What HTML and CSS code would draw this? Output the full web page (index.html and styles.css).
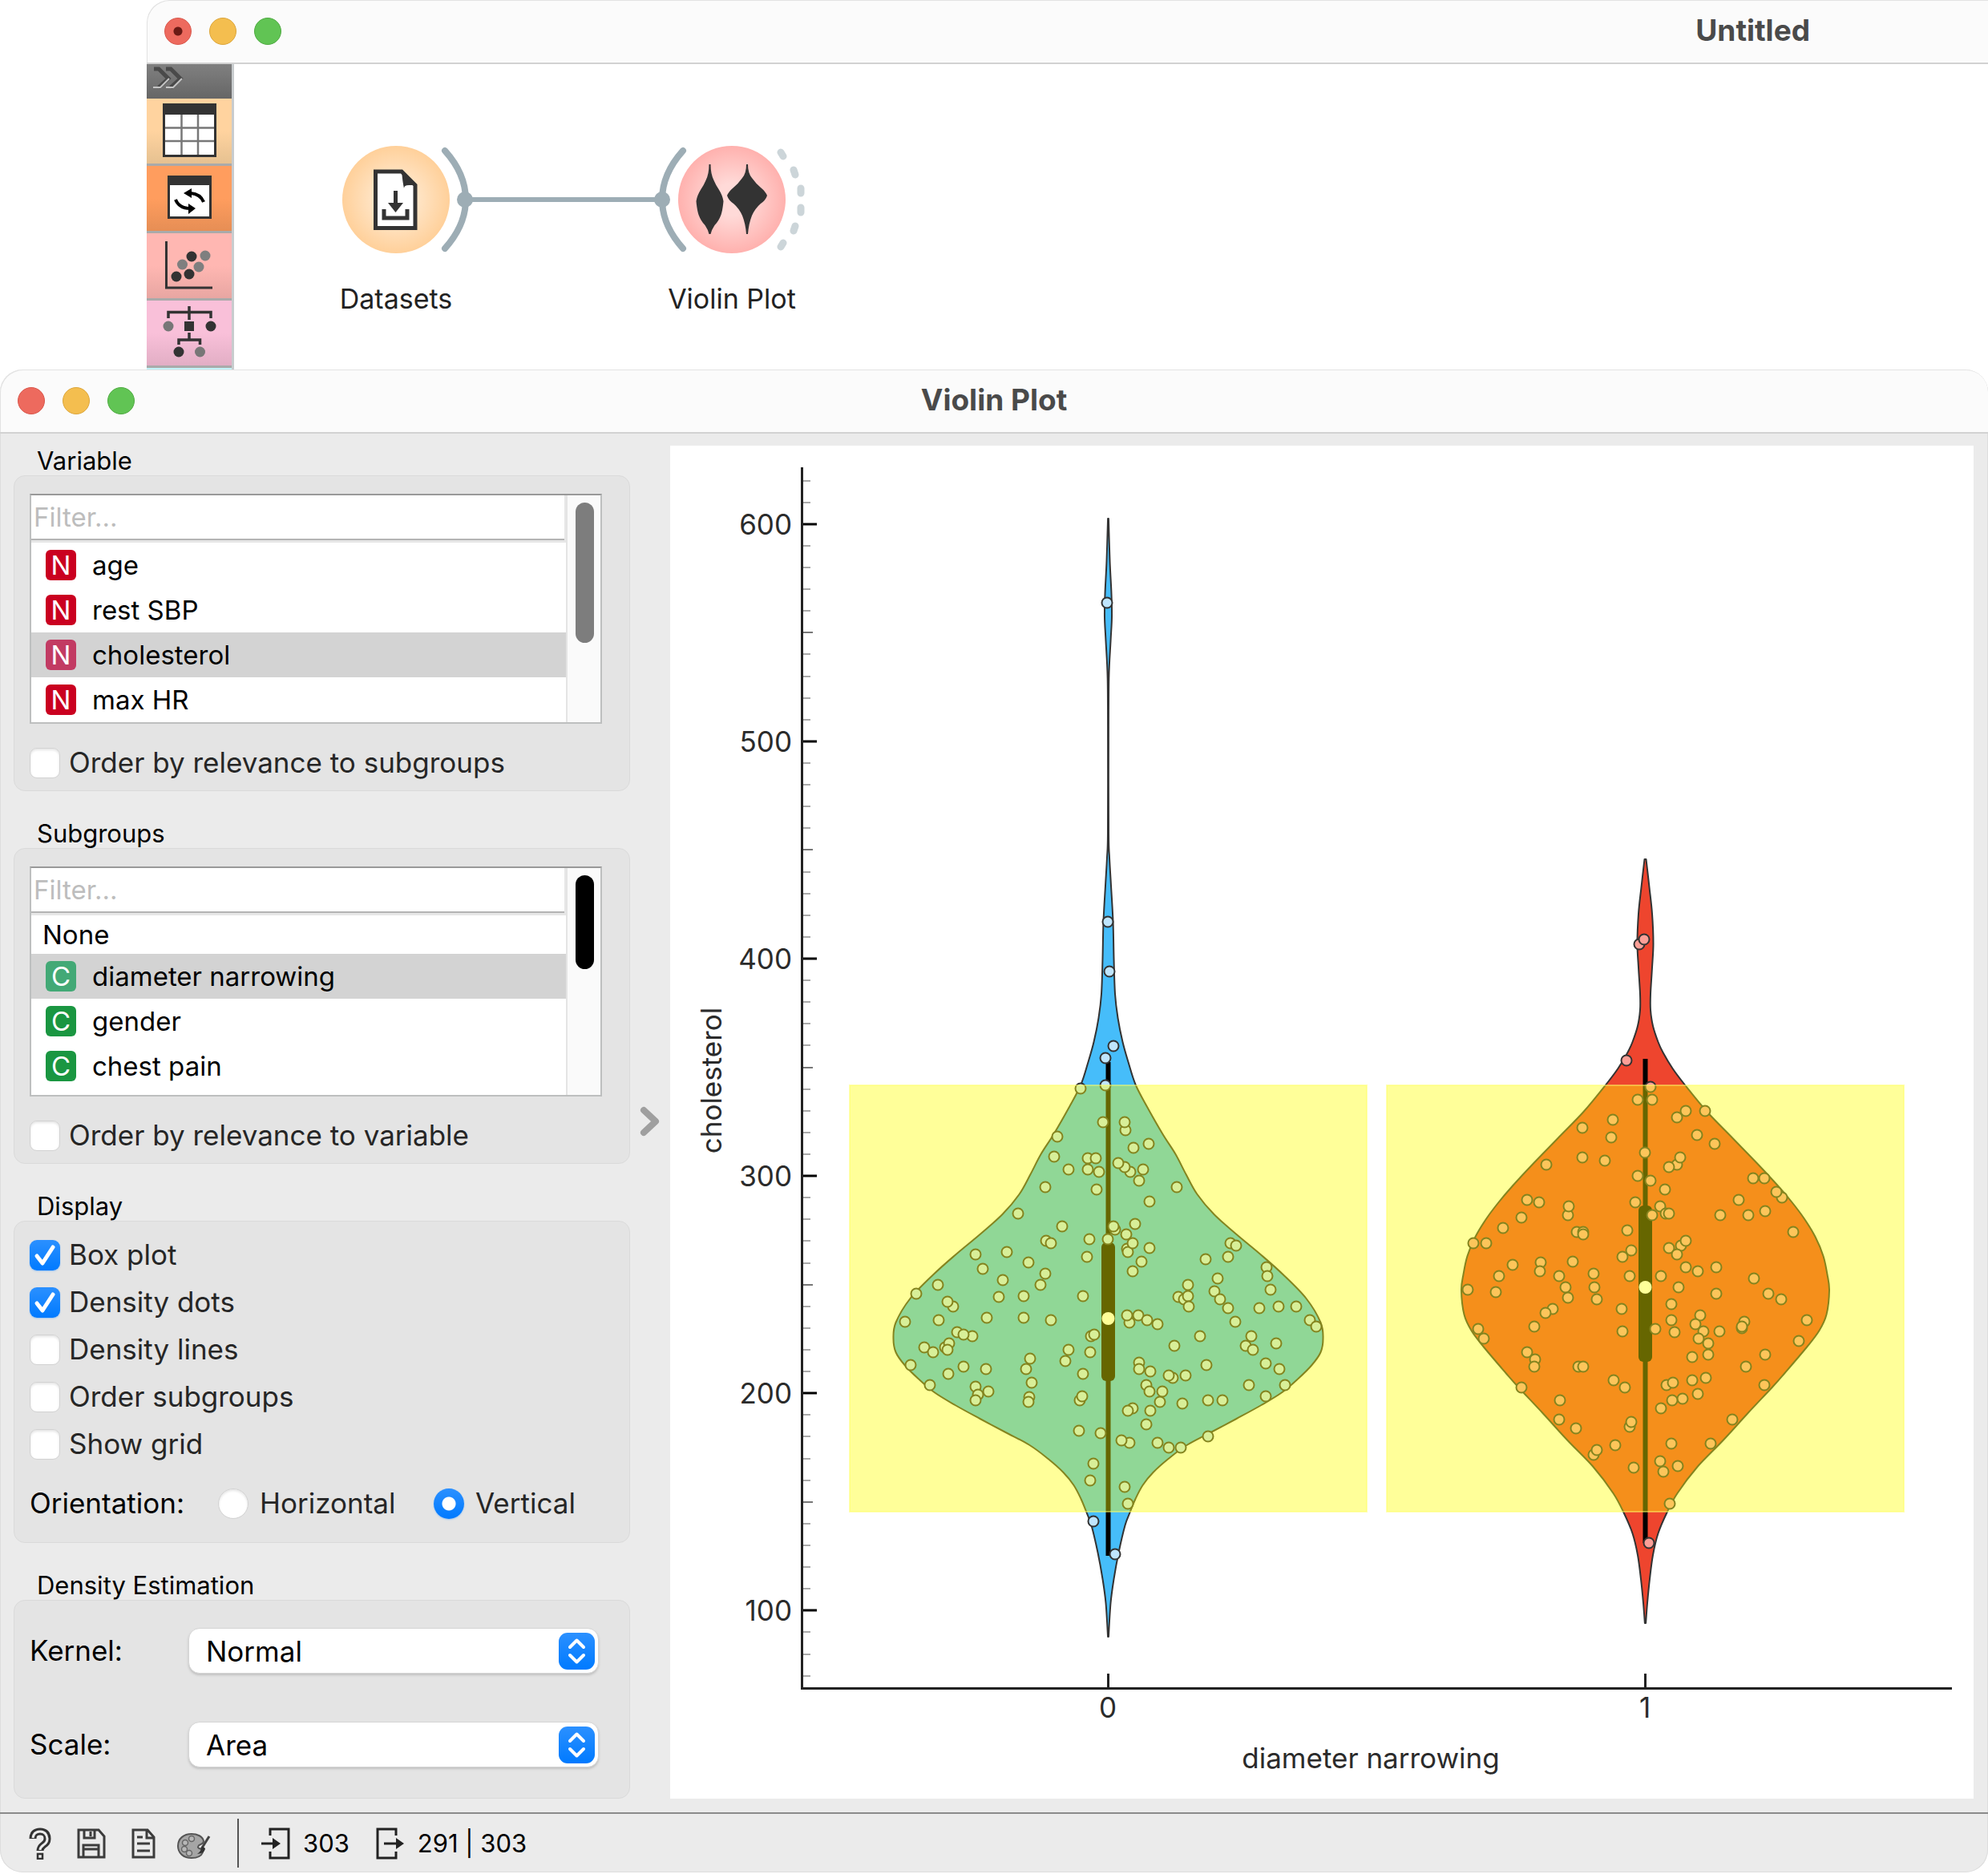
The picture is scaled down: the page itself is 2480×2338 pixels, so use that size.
FILE: index.html
```html
<!DOCTYPE html>
<html lang="en">
<head>
<meta charset="utf-8">
<title>Violin Plot</title>
<link rel="stylesheet" href="styles.css">
</head>
<body>
<section class="workflow" aria-label="Untitled">
  <header class="titlebar titlebar-wide">
    <div class="lights">
      <button class="light close edited" aria-label="Close"></button>
      <button class="light minimize" aria-label="Minimize"></button>
      <button class="light expand" aria-label="Zoom"></button>
    </div>
    <h1 class="title">Untitled</h1>
  </header>
  <div class="workspace">
    <nav class="toolbox" aria-label="Widget categories">
      <button class="toolbox-expand" aria-label="Expand">
        <svg width="60" height="43" viewBox="0 0 60 43" fill="none" stroke-width="5">
          <path d="M9 6h6l12 12-12 11M24 6h6l12 12-12 11" stroke="#4a4a4a"/>
          <path d="M8 29h9l11-11M24 29h9l11-11" stroke="#c4c4c4" stroke-width="2"/>
        </svg>
      </button>
      <button class="tile data" aria-label="Data">
        <svg width="106" height="81" viewBox="0 0 106 81">
          <path d="M20 6h67v67H20z" fill="#333"/>
          <path d="M23 20h61v50H23z" fill="#fff"/>
          <path d="M43.500 20v50M64 20v50M23 36.500h61M23 53h61" stroke="#777" stroke-width="2.500"/>
        </svg>
      </button>
      <button class="tile transform" aria-label="Transform">
        <svg width="106" height="81" viewBox="0 0 106 81">
          <path d="M26 12h55v54H26z" fill="#333"/>
          <path d="M29 24h49v39H29z" fill="#fff"/>
          <path d="M36 42q4 10 16 11M71 45q-4-10-16-11" fill="none" stroke="#000" stroke-width="4"/>
          <path d="M46 34l10-6v12zM61 53l-9-6v13z"/>
        </svg>
      </button>
      <button class="tile visualize" aria-label="Visualize">
        <svg width="106" height="81" viewBox="0 0 106 81" fill="#333">
          <path d="M24.500 10v58H82" fill="none" stroke="#333" stroke-width="3"/>
          <circle cx="37" cy="54" r="6.500"/><circle cx="53" cy="51" r="6.500"/><circle cx="56" cy="29" r="6.500"/>
          <g fill="#7f7f7f"><circle cx="44.500" cy="39" r="6.500"/><circle cx="65" cy="42" r="6.500"/><circle cx="73" cy="28" r="6.500"/></g>
        </svg>
      </button>
      <button class="tile model" aria-label="Model">
        <svg width="106" height="81" viewBox="0 0 106 81" fill="#333">
          <path d="M53 7v17M27 22v-7.500h53V22M53 40v9M40 55v-6h26.500v6" fill="none" stroke="#333" stroke-width="3.500"/>
          <path d="M47 26h12v12H47z"/>
          <circle cx="80" cy="32" r="6.500"/><circle cx="40" cy="64" r="6.500"/>
          <g fill="#777"><circle cx="27" cy="32" r="6.500"/><circle cx="66.500" cy="64" r="6.500"/></g>
        </svg>
      </button>
      <button class="tile evaluate" aria-label="Evaluate"></button>
    </nav>
    <svg class="canvas" height="382" role="img" aria-label="Datasets connected to Violin Plot">
      <defs>
        <radialGradient id="g-data"><stop offset="0.300" stop-color="#ffe8cd"/><stop offset="1" stop-color="#ffd09a"/></radialGradient>
        <radialGradient id="g-vis"><stop offset="0.300" stop-color="#ffdad8"/><stop offset="1" stop-color="#ffb1ae"/></radialGradient>
      </defs>
      <g fill="none" stroke="#9dadb5" stroke-linecap="round">
        <path d="M288 169H535" stroke-width="6"/>
        <path d="M263 108Q289 137 289 169T263 230M560 108Q534 137 534 169T560 230" stroke-width="8"/>
        <path d="M682 110l3 5M698 132l2 6M707 155v6M707 179v6M700 202l-2 6M685 223l-3 5" stroke="#ccd5d9" stroke-width="9"/>
      </g>
      <circle cx="288" cy="169" r="10" fill="#9dadb5"/><circle cx="534" cy="169" r="10" fill="#9dadb5"/>
      <circle cx="202" cy="169" r="67" fill="url(#g-data)"/>
      <circle cx="621" cy="169" r="67" fill="url(#g-vis)"/>
      <path d="M176.500 134H209l17 17v53.500H176.500z" fill="#fff" stroke="#333" stroke-width="5"/>
      <path d="M209 132l19 19h-10q-6 0-6 4-2-9-3-23z" fill="#333"/>
      <path d="M187 181v11h29v-11" fill="none" stroke="#333" stroke-width="5"/>
      <path d="M199 158h5v15h7l-9.500 12-9.500-12h7z" fill="#333"/>
      <g fill="#333">
        <path d="M592.500 125h2q0 12 4 20 3 7 6 11 5 8 6 15-1 11-3 17-3 8-8 13-4 6-5 11h-2q-1-5-5-11-5-5-8-13-2-6-3-17 1-7 6-15 3-4 6-11 4-8 4-20z"/>
        <path d="M639 125h2q0 11 5 17 5 7 11 12 6 5 8 10-2 6-8 10-7 6-11 15-4 10-5 23h-2q-1-13-5-23-4-9-11-15-6-4-8-10 2-5 8-10 6-5 11-12 5-6 5-17z"/>
      </g>
      <g class="node-label"><text x="202" y="305">Datasets</text><text x="621" y="305">Violin Plot</text></g>
    </svg>
  </div>
</section>

<main class="window">
  <header class="titlebar">
    <div class="lights">
      <button class="light close" aria-label="Close"></button>
      <button class="light minimize" aria-label="Minimize"></button>
      <button class="light expand" aria-label="Zoom"></button>
    </div>
    <h1 class="title">Violin Plot</h1>
  </header>
  <div class="content">
    <aside class="sidebar">
      <section class="group">
        <h2>Variable</h2>
        <div class="box">
          <div class="listbox">
            <div class="list">
              <input class="filter" type="text" placeholder="Filter..." aria-label="Filter variables">
              <ul role="listbox" aria-label="Variable">
                <li role="option"><span class="badge num">N</span>age</li>
                <li role="option"><span class="badge num">N</span>rest SBP</li>
                <li role="option" class="selected" aria-selected="true"><span class="badge num">N</span>cholesterol</li>
                <li role="option"><span class="badge num">N</span>max HR</li>
              </ul>
            </div>
            <div class="track"><div class="thumb"></div></div>
          </div>
          <label class="check"><input type="checkbox">Order by relevance to subgroups</label>
        </div>
      </section>
      <section class="group">
        <h2>Subgroups</h2>
        <div class="box">
          <div class="listbox">
            <div class="list">
              <input class="filter" type="text" placeholder="Filter..." aria-label="Filter subgroups">
              <ul role="listbox" aria-label="Subgroups">
                <li role="option" class="plain">None</li>
                <li role="option" class="selected" aria-selected="true"><span class="badge cat">C</span>diameter narrowing</li>
                <li role="option"><span class="badge cat">C</span>gender</li>
                <li role="option"><span class="badge cat">C</span>chest pain</li>
              </ul>
            </div>
            <div class="track"><div class="thumb thumb-active"></div></div>
          </div>
          <label class="check"><input type="checkbox">Order by relevance to variable</label>
        </div>
      </section>
      <section class="group">
        <h2>Display</h2>
        <div class="box">
          <div class="checks">
            <label class="check"><input type="checkbox" checked>Box plot</label>
            <label class="check"><input type="checkbox" checked>Density dots</label>
            <label class="check"><input type="checkbox">Density lines</label>
            <label class="check"><input type="checkbox">Order subgroups</label>
            <label class="check"><input type="checkbox">Show grid</label>
          </div>
          <div class="orientation" role="radiogroup" aria-labelledby="orientation-label">
            <span id="orientation-label" class="field-label">Orientation:</span>
            <label class="check radio"><input type="radio" name="orientation">Horizontal</label>
            <label class="check radio"><input type="radio" name="orientation" checked>Vertical</label>
          </div>
        </div>
      </section>
      <section class="group">
        <h2>Density Estimation</h2>
        <div class="box fields">
          <label class="field-label" for="kernel">Kernel:</label>
          <select id="kernel"><option>Normal</option><option>Epanechnikov</option><option>Linear</option></select>
          <label class="field-label" for="scale">Scale:</label>
          <select id="scale"><option>Area</option><option>Count</option><option>Width</option></select>
        </div>
      </section>
    </aside>
    <button class="splitter" aria-label="Collapse controls">
      <svg width="26" height="40" viewBox="0 0 26 40" fill="none" stroke="#9f9f9f" stroke-width="8"><path d="M5 5l15 14L5 33" stroke-linecap="round" stroke-linejoin="round"/></svg>
    </button>
    <div class="plot">
      <svg id="chart" viewBox="836 556 1626 1688" role="img" aria-label="Violin plot of cholesterol by diameter narrowing">
        <g id="violins"></g>
        <g class="selection">
          <rect x="1060" y="1354" width="645" height="532"/>
          <rect x="1730" y="1354" width="645" height="532"/>
        </g>
        <g id="ticks"></g>
        <path class="axis" d="M1000.500 583V2106.500H2435"/>
        <g class="tick-x">
          <path d="M1382.500 2088v18M2052.500 2088v18"/>
          <text x="1382" y="2143">0</text><text x="2052" y="2143">1</text>
        </g>
        <text class="axis-title" x="1710" y="2206">diameter narrowing</text>
        <text class="axis-title" transform="translate(900 1348) rotate(-90)">cholesterol</text>
      </svg>
    </div>
  </div>
  <footer class="status">
    <div class="tools">
      <button aria-label="Help"><svg width="28" height="40" viewBox="0 0 28 40"><path d="M5 14q0-9 9-9t9 9q0 5-5 8-4 3-4 7" fill="none" stroke="#333" stroke-width="9"/><path d="M5 13q1-8 9-8t9 9q0 5-5 8-4 3-4 6" fill="none" stroke="#ececec" stroke-width="3"/><rect x="11" y="33" width="6" height="6" fill="#ececec" stroke="#333" stroke-width="2.500"/></svg></button>
      <button aria-label="Save"><svg width="36" height="40" viewBox="0 0 36 40" fill="none" stroke="#3c3c3c" stroke-width="3"><path d="M2 3h25l7 8v26H2zM9 3v10h13V3M17 5v6M8 37V22h19v15M9 27h17"/></svg></button>
      <button aria-label="Report"><svg width="30" height="40" viewBox="0 0 30 40" fill="none" stroke="#3c3c3c" stroke-width="3"><path d="M2 3h18l8 9v25H2zM19 3v10h9M7 12h7M7 20h16M7 29h16"/></svg></button>
      <button aria-label="Visual settings"><svg width="42" height="40" viewBox="0 0 42 40"><path d="M18 8c7 0 14 3 15 9 0 5-6 3-7 7-1 3 8 2 6 7-2 5-8 7-14 7C8 38 1 32 1 23S8 8 18 8z" fill="#a5a5a5" stroke="#555" stroke-width="2"/><g fill="#b8b8b8" stroke="#666" stroke-width="1.500"><circle cx="18" cy="14" r="3.500"/><circle cx="10" cy="19" r="3.500"/><circle cx="9" cy="27" r="3.500"/><circle cx="15" cy="32" r="3.500"/></g><path d="M40 11L30 27" stroke="#444" stroke-width="3"/><path d="M31 23l4 3q0 6-10 7 5-3 6-10z" fill="#333"/></svg></button>
    </div>
    <button class="counter" aria-label="Input"><svg width="36" height="40" viewBox="0 0 36 40"><path d="M11 10V2h23v36H11v-8" fill="none" stroke="#222" stroke-width="3"/><path d="M0 20h15" stroke="#222" stroke-width="3"/><path d="M14 13l10 7-10 7z" fill="#222"/></svg>303</button>
    <button class="counter" aria-label="Output"><svg width="36" height="40" viewBox="0 0 36 40"><path d="M25 10V2H2v36h23v-8" fill="none" stroke="#222" stroke-width="3"/><path d="M10 20h16" stroke="#222" stroke-width="3"/><path d="M25 13l10 7-10 7z" fill="#222"/></svg>291 | 303</button>
  </footer>
</main>
<script src="chart.js"></script>
</body>
</html>
```
FILE: styles.css
```css
* { box-sizing: border-box; }
body {
  margin: 0;
  background: #fff;
  color: #000;
  font-family: Inter, "Liberation Sans", sans-serif;
  font-size: 35px;
}
button {
  display: block;
  padding: 0;
  border: 0;
  background: none;
  color: inherit;
  font: inherit;
}
svg { display: block; }
h1, h2, ul { margin: 0; padding: 0; }

/* Title bars */
.titlebar {
  display: grid;
  grid-template-columns: 1fr auto 1fr;
  align-items: center;
  height: 80px;
  padding: 0 22px;
  background: #fbfbfb;
  border-bottom: 2px solid #d2d2d2;
}
.titlebar-wide {
  grid-template-columns: 1fr auto;
  padding-right: 222px;
}
.title { padding-bottom: 3px; color: #4a4a4a; font-size: 37px; font-weight: 700; line-height: 44px; }
.lights { display: flex; gap: 22px; }
.light { width: 34px; height: 34px; border-radius: 50%; border: 1px solid; }
.close { background: #ed6a5e; border-color: #d9574c; }
.minimize { background: #f4be4f; border-color: #dca63c; }
.expand { background: #61c454; border-color: #50ab43; }
.edited { background: radial-gradient(circle, #6b1a14 0 5px, #ed6a5e 6px); }

/* Workflow window */
.workflow {
  height: 461px;
  margin-left: 183px;
  overflow: hidden;
  border-top-left-radius: 28px;
}
.workflow .titlebar { border-top-left-radius: 28px; box-shadow: inset 1px 1px #e2e2e2; }
.workspace { display: flex; }
.toolbox { flex: none; width: 109px; border-right: 3px solid #c8ccce; }
.toolbox-expand { width: 100%; height: 43px; background: linear-gradient(#808080, #666); }
.tile { width: 100%; height: 84px; border-bottom: 3px solid #aaa; }
.data { background: linear-gradient(#ffd39f 50%, #e6c191); }
.transform { background: linear-gradient(#ff9d5e 50%, #e68e55); }
.visualize { background: linear-gradient(#ffb7b2 50%, #e8a6a2); }
.model { background: linear-gradient(#f9c0d9 50%, #e2aec5); }
.evaluate { background: #c3f3f8; }
.canvas { flex: 1; min-width: 0; }
.node-label { fill: #222; text-anchor: middle; font-size: 34px; }

/* Widget window */
.window {
  margin-bottom: 2px;
  overflow: hidden;
  background: #ebebeb;
  border-radius: 28px;
  box-shadow: inset 0 0 0 1px #ddd;
}
.window .titlebar { border-radius: 28px 28px 0 0; box-shadow: inset 1px 1px #e2e2e2; }
.content { display: flex; padding: 15px 18px 17px 17px; }
.sidebar { flex: none; width: 769px; }
.group + .group { margin-top: 35px; }
.group h2 {
  padding-left: 29px;
  font-size: 31px;
  font-weight: 400;
  line-height: 37px;
}
.box {
  padding: 22px 34px 15px 19px;
  background: #e4e4e4;
  border: 1px solid #dadada;
  border-radius: 14px;
}
.group + .group { margin-top: 34px; }

/* Filterable lists */
.listbox {
  display: flex;
  height: 287px;
  margin-bottom: 29px;
  background: #fff;
  border: 2px solid #bdbfbf;
  border-top-color: #999;
}
.list { flex: 1; background: #e6e6e6; font-size: 33px; }
.filter {
  display: block;
  width: calc(100% - 2px);
  height: 56px;
  margin-bottom: 3px;
  padding: 0 3px;
  border: 0;
  border-bottom: 2px solid #b4b4b4;
  border-radius: 0;
  background: #fff;
  font: inherit;
}
.filter::placeholder { color: #bdbdbd; }
.list ul { height: 224px; background: #fff; list-style: none; }
.list li {
  display: flex;
  align-items: center;
  gap: 20px;
  height: 56px;
  padding-left: 18px;
}
.list .plain { height: 48px; padding-left: 14px; }
.selected { background: #d3d3d3; }
.badge {
  width: 38px;
  height: 38px;
  border-radius: 6px;
  color: #fff;
  font-size: 33px;
  line-height: 38px;
  text-align: center;
}
.num { background: #ca0020; }
.cat { background: #1a9641; }
.selected .num { background: #c23b63; }
.selected .cat { background: #43a976; }
.track {
  width: 43px;
  padding: 9px 7px 0 10px;
  background: #fafafa;
  border-left: 2px solid #e4e4e4;
}
.thumb { width: 23px; height: 175px; border-radius: 12px; background: #7d7d7d; }
.thumb-active { height: 117px; background: #000; }

/* Check boxes and radio buttons */
.checks { display: grid; gap: 20px; }
.check {
  display: flex;
  align-items: center;
  gap: 11px;
  height: 39px;
  color: #262626;
  line-height: 39px;
}
.check input {
  appearance: none;
  flex: none;
  width: 38px;
  height: 38px;
  margin: 0;
  background: #fff;
  border: 1px solid #d2d2d2;
  border-radius: 9px;
  box-shadow: inset 0 2px 3px #e6e6e6;
}
.check input:checked {
  background: url("data:image/svg+xml,%3Csvg xmlns='http://www.w3.org/2000/svg' viewBox='0 0 38 38'%3E%3Cpath d='M9 20l7 9L29 9' fill='none' stroke='white' stroke-width='5' stroke-linecap='round' stroke-linejoin='round'/%3E%3C/svg%3E") center / 38px, linear-gradient(#2b90ff, #007aff);
  border: 0;
  box-shadow: 0 1px 2px #9cc4f0;
}
.check.radio { gap: 14px; }
.radio input { border-radius: 50%; }
.check.radio input:checked { background: radial-gradient(circle, #fff 8px, transparent 9px), linear-gradient(#2b90ff, #007aff); }
.orientation {
  display: grid;
  grid-template-columns: 235px 269px 1fr;
  align-items: center;
  margin: 35px 0 14px;
}
.field-label { line-height: 39px; }

/* Drop-downs */
.fields {
  display: grid;
  grid-template-columns: 198px 512px;
  row-gap: 60px;
  align-items: center;
  padding-top: 34px;
  padding-bottom: 38px;
}
select {
  appearance: none;
  height: 57px;
  padding: 0 60px 0 21px;
  border: 1px solid #d6d6d6;
  border-radius: 14px;
  background: #fff url("data:image/svg+xml,%3Csvg xmlns='http://www.w3.org/2000/svg' viewBox='0 0 45 46'%3E%3Cdefs%3E%3ClinearGradient id='g' x2='0' y2='1'%3E%3Cstop stop-color='%232b90ff'/%3E%3Cstop offset='1' stop-color='%23007aff'/%3E%3C/linearGradient%3E%3C/defs%3E%3Crect width='45' height='46' rx='11' fill='url(%23g)'/%3E%3Cpath d='M14 18l8.500-8.500L31 18M14 28l8.500 8.500L31 28' fill='none' stroke='white' stroke-width='4' stroke-linecap='round' stroke-linejoin='round'/%3E%3C/svg%3E") no-repeat right 4px center / 45px 46px;
  box-shadow: 0 2px 3px #c0c0c0;
  color: #000;
  font: inherit;
}

.splitter { flex: none; display: flex; align-items: center; justify-content: center; width: 50px; }

/* Plot */
.plot { flex: 1; min-width: 0; background: #fff; }
.plot svg { width: 100%; height: auto; }
.plot text { fill: #2b2b2b; font-size: 35px; }
.axis { fill: none; stroke: #222; stroke-width: 3; }
.tick-x path { stroke: #222; stroke-width: 3; }
.tick-x text, .axis-title { text-anchor: middle; }
#ticks text { text-anchor: end; }
.major { stroke: #000; stroke-width: 3; }
.middle { stroke: #777; stroke-width: 2; }
.minor { stroke: #aaa; stroke-width: 2; }
.selection rect { fill: #ff0; fill-opacity: 0.4; stroke: #ff6; stroke-opacity: 0.5; stroke-width: 2; }
.violin { stroke: #333; stroke-width: 2; stroke-linejoin: round; }
.dot { stroke: #333; stroke-width: 2; }

/* Status bar */
.status {
  display: flex;
  align-items: center;
  height: 75px;
  padding-left: 36px;
  border-top: 2px solid #8a8a8a;
  font-size: 31px;
}
.tools {
  display: flex;
  align-items: center;
  gap: 32px;
  height: 61px;
  margin-right: 28px;
  padding-right: 33px;
  border-right: 2px solid #555;
}
.tools button:last-child { margin-left: -5px; }
.counter { display: flex; align-items: center; gap: 16px; margin-right: 33px; }
```
FILE: chart.js
```js
const NS = "http://www.w3.org/2000/svg";

function add(parent, name, attrs, text) {
  const el = document.createElementNS(NS, name);
  for (const key in attrs) el.setAttribute(key, attrs[key]);
  if (text !== undefined) el.textContent = text;
  parent.appendChild(el);
}

// profile: [y, half width] pairs from top to bottom; dots: x, y pairs.
const groups = [
  {
    x: 1382.5, fill: "#46bdfa", dot: "#bfe5fd",
    whisker: [1325, 1941], box: [1550, 1723], median: 1645,
    profile: [[647, .4], [700, 2], [741, 4], [770, 4.500], [800, 3], [846, .8], [925, .4], [1040, .5], [1070, 1.500], [1105, 3.500],
      [1150, 6], [1196, 7], [1240, 8.500], [1270, 12], [1300, 18], [1325, 25], [1353, 34], [1380, 48], [1415, 68], [1440, 84],
      [1465, 97], [1490, 111], [1515, 132], [1540, 160], [1565, 190], [1590, 218], [1620, 247], [1650, 265], [1670, 268],
      [1687, 265], [1703, 254], [1720, 237], [1737, 217], [1753, 191], [1770, 160], [1787, 128], [1803, 98], [1820, 75],
      [1837, 56], [1853, 43], [1870, 34], [1887, 27], [1903, 21], [1937, 13], [1970, 7], [2000, 3], [2042, .4]],
    dots: [1381,752, 1382,1150, 1384,1212, 1389,1305, 1379,1320, 1348,1358, 1379,1354, 1376,1400, 1319,1418, 1315,1443,
      1333,1459, 1357,1445, 1367,1445, 1357,1459, 1371,1462, 1304,1481, 1368,1484, 1270,1514, 1325,1530, 1305,1548,
      1311,1551, 1359,1546, 1356,1568, 1217,1565, 1256,1562, 1226,1583, 1283,1575, 1304,1589, 1298,1603, 1251,1597,
      1170,1603, 1143,1614, 1189,1630, 1182,1624, 1246,1618, 1277,1617, 1351,1617, 1404,1410, 1403,1400, 1414,1432,
      1433,1427, 1410,1462, 1403,1456, 1395,1451, 1426,1459, 1421,1473, 1468,1481, 1434,1499, 1391,1534, 1389,1530,
      1382,1546, 1416,1527, 1405,1540, 1406,1558, 1407,1562, 1413,1551, 1434,1557, 1424,1574, 1413,1586, 1504,1571,
      1532,1568, 1535,1551, 1542,1554, 1580,1581, 1581,1592, 1585,1609, 1519,1595, 1515,1611, 1522,1621, 1532,1632,
      1482,1603, 1470,1618, 1477,1621, 1482,1617, 1483,1630, 1571,1632, 1595,1630, 1617,1630, 1129,1649, 1171,1647,
      1231,1644, 1277,1644, 1311,1647, 1194,1662, 1213,1667, 1202,1665, 1153,1681, 1164,1687, 1179,1681, 1184,1676,
      1182,1684, 1136,1703, 1202,1705, 1183,1714, 1230,1708, 1160,1728, 1217,1730, 1233,1736, 1220,1740, 1217,1747,
      1285,1695, 1280,1708, 1287,1725, 1284,1743, 1283,1749, 1333,1684, 1329,1698, 1361,1667, 1365,1665, 1360,1687,
      1351,1714, 1347,1747, 1350,1742, 1346,1785, 1373,1788, 1364,1826, 1360,1847, 1364,1898, 1391,1939, 1403,1855,
      1407,1876, 1409,1650, 1406,1641, 1420,1641, 1431,1647, 1444,1652, 1497,1667, 1465,1679, 1505,1703, 1421,1700,
      1421,1708, 1435,1711, 1463,1719, 1458,1716, 1479,1716, 1430,1728, 1434,1736, 1450,1736, 1447,1749, 1475,1751,
      1507,1747, 1525,1747, 1413,1757, 1407,1760, 1435,1760, 1430,1777, 1409,1800, 1399,1797, 1444,1800, 1458,1806,
      1473,1806, 1507,1792, 1541,1649, 1561,1667, 1554,1679, 1563,1684, 1592,1676, 1579,1701, 1596,1708, 1558,1728,
      1603,1728, 1579,1742, 1634,1647, 1642,1655]
  },
  {
    x: 2052.5, fill: "#ee452e", dot: "#fc9f97",
    whisker: [1321, 1925], box: [1504, 1699], median: 1606,
    profile: [[1072, 1], [1107, 5], [1140, 8.500], [1177, 10], [1207, 8.500], [1240, 6.500], [1260, 6.500], [1280, 9.500], [1300, 16],
      [1313, 22], [1333, 34], [1353, 49], [1387, 77], [1420, 109], [1453, 141], [1480, 166], [1500, 183], [1520, 198],
      [1543, 212], [1567, 222], [1590, 227], [1610, 229.500], [1640, 226], [1660, 217], [1680, 202], [1713, 174], [1730, 159],
      [1763, 128], [1797, 97], [1830, 65], [1863, 40], [1887, 27], [1913, 16], [1940, 9.500], [1970, 5.500], [2000, 2.500], [2025, .6]],
    dots: [2045,1178, 2051,1172, 2029,1323, 2059,1356, 2043,1372, 2061,1372, 2103,1386, 2127,1386, 2092,1394, 2012,1397,
      1974,1407, 2010,1419, 2117,1416, 2139,1427, 2052,1438, 1974,1444, 2002,1448, 1929,1453, 2092,1453, 2096,1444,
      2082,1456, 2043,1467, 2059,1473, 2077,1484, 2187,1470, 2201,1470, 2223,1494, 2216,1487, 1905,1497, 1920,1500,
      1898,1519, 1875,1532, 1838,1551, 1854,1551, 1956,1516, 1957,1505, 2040,1500, 2071,1505, 2061,1516, 2078,1514,
      2082,1514, 2169,1497, 2146,1516, 2181,1516, 2202,1511, 2237,1537, 1967,1537, 1975,1537, 1975,1540, 2030,1535,
      2035,1560, 2024,1568, 2082,1557, 2097,1554, 2103,1548, 2092,1565, 2103,1581, 2118,1586, 2141,1581, 1887,1578,
      1870,1592, 1831,1609, 1866,1612, 1922,1575, 1921,1586, 1945,1592, 1962,1574, 1953,1606, 1956,1619, 1988,1589,
      1989,1606, 1992,1621, 2033,1592, 2072,1592, 2094,1606, 2141,1614, 2188,1595, 2206,1614, 2222,1621, 2254,1647,
      2244,1673, 1937,1633, 1928,1638, 1914,1655, 1844,1658, 1851,1670, 2023,1633, 2024,1661, 2065,1658, 2085,1627,
      2085,1647, 2089,1662, 2121,1641, 2115,1652, 2125,1661, 2119,1670, 2131,1676, 2145,1661, 2131,1690, 2111,1693,
      2176,1649, 2173,1657, 2173,1655, 2202,1690, 2178,1705, 2201,1728, 1905,1687, 1915,1696, 1914,1705, 1898,1731,
      1969,1705, 1975,1705, 2013,1722, 2027,1731, 2079,1728, 2087,1725, 2111,1722, 2128,1719, 2118,1739, 2099,1745,
      2086,1747, 2072,1757, 1946,1747, 1945,1771, 1966,1782, 2161,1771, 2033,1780, 2035,1774, 2085,1801, 2134,1801,
      2015,1803, 1988,1815, 1992,1809, 2038,1831, 2071,1823, 2075,1836, 2093,1829, 2083,1876, 2057,1925]
  }
];

// Catmull-Rom spline through the points, as cubic segments.
function spline(points) {
  let d = "";
  for (let i = 0; i < points.length - 1; i++) {
    const a = points[i - 1] || points[i], b = points[i], c = points[i + 1], e = points[i + 2] || c;
    d += `C${b[0] + (c[0] - a[0]) / 6} ${b[1] + (c[1] - a[1]) / 6} ${c[0] - (e[0] - b[0]) / 6} ${c[1] - (e[1] - b[1]) / 6} ${c[0]} ${c[1]}`;
  }
  return d;
}

const violins = document.getElementById("violins");
for (const g of groups) {
  const right = g.profile.map(([y, w]) => [g.x + w, y]);
  const left = g.profile.map(([y, w]) => [g.x - w, y]).reverse();
  add(violins, "path", {
    class: "violin", fill: g.fill,
    d: `M${right[0]}${spline(right)}L${left[0]}${spline(left)}Z`
  });
  add(violins, "path", { d: `M${g.x} ${g.whisker[0]}V${g.whisker[1]}`, stroke: "#000", "stroke-width": 6 });
  add(violins, "rect", { x: g.x - 8.5, y: g.box[0], width: 17, height: g.box[1] - g.box[0], rx: 6 });
  for (let i = 0; i < g.dots.length; i += 2) {
    add(violins, "circle", { class: "dot", cx: g.dots[i], cy: g.dots[i + 1], r: 6.5, fill: g.dot });
  }
  add(violins, "circle", { cx: g.x, cy: g.median, r: 8, fill: "#fff" });
}

const ticks = document.getElementById("ticks");
for (let v = 70; v <= 620; v += 10) {
  const y = Math.round(653.8 + (600 - v) * 2.711);
  const kind = v % 100 === 0 ? "major" : v % 50 === 0 ? "middle" : "minor";
  const end = { major: 1019, middle: 1014, minor: 1011 }[kind];
  add(ticks, "path", { class: kind, d: `M1001 ${y}H${end}` });
  if (kind === "major") add(ticks, "text", { x: 988, y: y + 13 }, v);
}
```
